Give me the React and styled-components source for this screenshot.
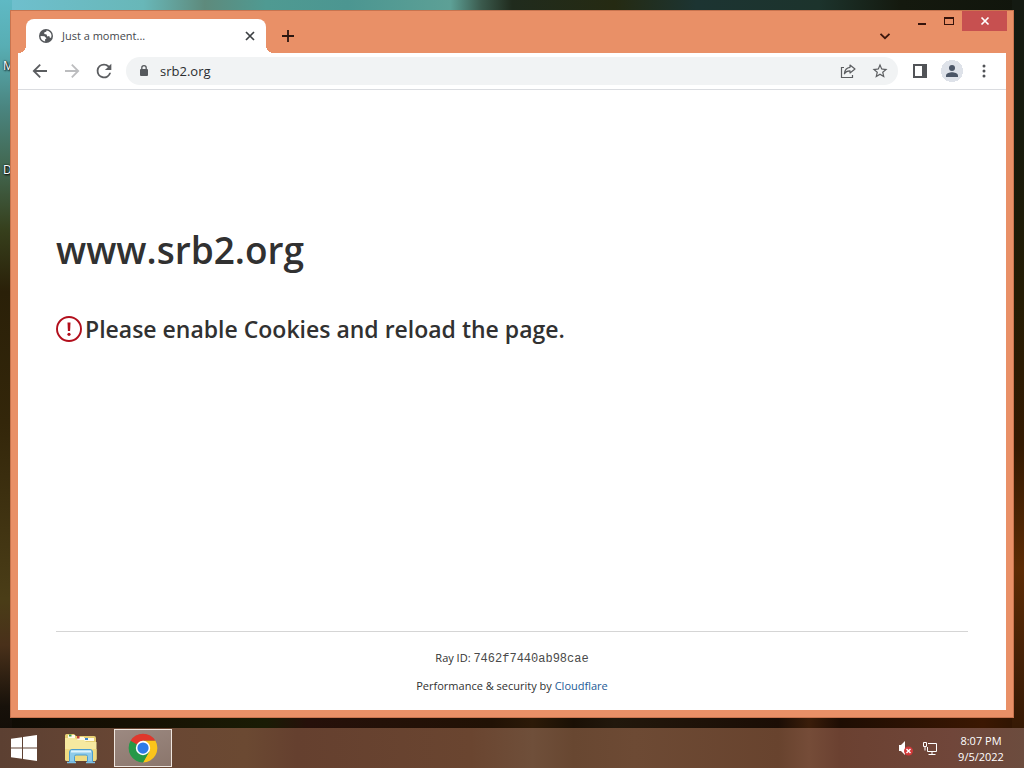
import React, { useState } from 'react';
import styled, { createGlobalStyle } from 'styled-components';

const GlobalStyle = createGlobalStyle`
  * { box-sizing: border-box; }

  body {
    margin: 0;
    font-family: 'Open Sans', 'Noto Sans', sans-serif;
    font-size: 11px;
    line-height: 18px;
    color: #313131;
  }

  button, input {
    font: inherit;
    color: inherit;
    border: 0;
    padding: 0;
    background: none;
  }
`;

// --- DESKTOP ---

const Desktop = styled.div`
  position: relative;
  display: flex;
  flex-direction: column;
  min-height: 100vh;
  background:
    linear-gradient(to bottom, #5fb9c4 0%, #58aeb4 6%, #4a8580 14%, #42664f 22%, #363f1c 30%, #2a2008 38%, #33260a 55%, #4a3d17 78%, #49301a 84%, #17110a 92%, #0d0a05 100%) left / 12px 100% no-repeat,
    linear-gradient(to bottom, #141a12 0%, #171a0c 18%, #241c04 38%, #341a02 58%, #5c2b05 74%, #452107 86%, #2c1402 100%) right / 12px 100% no-repeat,
    linear-gradient(to right, #6fc0cf 0%, #68b7b8 14%, #5e8a7c 20%, #4f9a92 26%, #4c9691 34%, #5da096 44%, #3b5a4d 47%, #202b1d 50%, #252a12 60%, #1c3432 68%, #1c332c 80%, #14190e 88%, #11150c 100%) top / 100% 12px no-repeat,
    linear-gradient(to right, #0f0c05 0%, #161003 12%, #1a1c05 26%, #26100a 30%, #211205 48%, #2c1a08 52%, #1a1005 56%, #22180c 60%, #1b0d05 76%, #3a1d0a 79%, #1e0d03 82%, #3b1702 96%, #2c1402 100%);
`;

const DesktopLabel = styled.span`
  position: absolute;
  left: 3px;
  top: ${({ $top }) => $top}px;
  font-size: 12px;
  color: #fff;
  text-shadow: 1px 1px 2px #000, 0 0 2px #000;
`;

const Workspace = styled.main`
  position: relative;
  flex: 1;
  display: flex;
  padding: 10px;
`;

// --- BROWSER WINDOW ---

const BrowserWindow = styled.section`
  flex: 1;
  min-width: 0;
  display: flex;
  flex-direction: column;
  padding: 0 7px 7px;
  background: #e99067;
  border: 1px solid #c8744f;
`;

const TitleBar = styled.div`
  display: flex;
  align-items: flex-start;
  height: 42px;
`;

const Tab = styled.div`
  position: relative;
  display: flex;
  align-items: center;
  width: 240px;
  height: 34px;
  margin: 8px 10px 0 8px;
  padding: 0 8px 0 12px;
  background: #fff;
  border-radius: 8px 8px 0 0;

  &::before,
  &::after {
    content: '';
    position: absolute;
    bottom: 0;
    width: 8px;
    height: 8px;
  }

  &::before {
    right: 100%;
    background: radial-gradient(circle at 0 0, transparent 8px, #fff 8px);
  }

  &::after {
    left: 100%;
    background: radial-gradient(circle at 100% 0, transparent 8px, #fff 8px);
  }
`;

const TabTitle = styled.span`
  flex: 1;
  margin-left: 8px;
  color: #45484c;
`;

const IconButton = styled.button`
  display: flex;
  align-items: center;
  justify-content: center;
  flex: none;
  width: ${({ $size }) => $size || 28}px;
  height: ${({ $size }) => $size || 28}px;
  border-radius: 50%;
  color: ${({ $color }) => $color || '#5b5d60'};
`;

const TabStripButton = styled(IconButton)`
  margin-top: 13px;
`;

const Spacer = styled.div`
  flex: 1;
`;

// the close button runs over the inner edge of the frame
const WindowControls = styled.div`
  display: flex;
  margin: 0 -1px 0 11px;
`;

const WindowButton = styled.button`
  display: flex;
  align-items: center;
  justify-content: center;
  width: ${({ $close }) => ($close ? 45 : 27)}px;
  height: 20px;
  background: ${({ $close }) => ($close ? '#c75050' : 'transparent')};
`;

const Toolbar = styled.div`
  display: flex;
  align-items: center;
  gap: 4px;
  height: 37px;
  padding: 0 8px;
  background: #fff;
  border-bottom: 1px solid #dadce0;
`;

const Omnibox = styled.label`
  flex: 1;
  display: flex;
  align-items: center;
  gap: 4px;
  height: 28px;
  margin: 0 4px;
  padding: 0 4px 0 10px;
  background: #f1f3f4;
  border-radius: 14px;
`;

const Address = styled.input`
  flex: 1;
  min-width: 0;
  margin-left: 4px;
  font-size: 13px;
  color: #2b2d30;
  outline: none;
`;

const Avatar = styled(IconButton)`
  background: radial-gradient(circle, #dee2e9 11px, transparent 11px);
`;

// --- PAGE ---

const Page = styled.div`
  flex: 1;
  display: flex;
  flex-direction: column;
  padding: 0 38px;
  background: #fff;
`;

const PageBody = styled.div`
  flex: 1;
  padding-top: 130px;
`;

const SiteName = styled.h1`
  margin: 0;
  font-size: 37px;
  line-height: 60px;
  font-weight: 600;
`;

const Notice = styled.h2`
  display: flex;
  align-items: center;
  gap: 3px;
  margin: 32px 0 0;
  font-size: 23px;
  line-height: 34px;
  font-weight: 600;
`;

const Footer = styled.footer`
  display: flex;
  flex-direction: column;
  gap: 10px;
  padding: 17px 0 15px;
  border-top: 1px solid #d5d5d5;
  text-align: center;

  code {
    font-family: 'Liberation Mono', monospace;
    font-size: 12px;
    line-height: 1;
    color: #4a4a4a;
  }

  a {
    color: #1d5a96;
    text-decoration: none;
  }
`;

// --- TASKBAR ---

const Taskbar = styled.nav`
  display: flex;
  align-items: center;
  height: 40px;
  background: linear-gradient(to right, #5c4032 0%, #684634 12%, #6b4932 24%, #65402f 29%, #6a4530 46%, #6f4f3a 52%, #684731 56%, #6d4a34 62%, #68432e 76%, #754c38 79%, #6b4131 82%, #70463a 93%, #6c4c3e 100%);
`;

const TaskButton = styled.button`
  display: flex;
  align-items: center;
  justify-content: center;
  width: ${({ $narrow }) => ($narrow ? 48 : 58)}px;
  height: 38px;
  margin-right: 4px;
  background: ${({ $active }) => ($active ? 'linear-gradient(160deg, #9c8981, #8b766c)' : 'transparent')};
  border: ${({ $active }) => ($active ? '1px solid #efe6df' : '0')};
`;

const Tray = styled.div`
  display: flex;
  align-items: center;
  gap: 8px;
  margin-left: auto;
`;

const Clock = styled.div`
  width: 60px;
  margin: 0 13px 0 5px;
  padding-top: 2px;
  line-height: 16px;
  text-align: center;
  color: #fff;
`;

// --- ICONS ---

const GlobeIcon = () => (
  <svg width="16" height="16" viewBox="0 0 16 16">
    <circle cx="8" cy="8" r="7" fill="#55585c" />
    <path d="M2.6 8 6.4 8.2 8.5 10.2 7 11.4 7.2 13.4A5.6 5.6 0 0 1 2.5 8Z" fill="#fff" />
    <path d="M8.6 2.5 8.2 3.8 6.4 4.2 6.2 6 8.6 6.4 9.2 8.4 11.2 8 12 10.1 13.2 9.4A5.6 5.6 0 0 0 10.4 2.9Z" fill="#fff" />
  </svg>
);

const CloseIcon = () => (
  <svg width="16" height="16" viewBox="0 0 16 16" stroke="#3c4043" strokeWidth="1.7">
    <path d="M4 4 12 12M12 4 4 12" />
  </svg>
);

const PlusIcon = () => (
  <svg width="16" height="16" viewBox="0 0 16 16" stroke="#2b1610" strokeWidth="1.8">
    <path d="M8 2V14M2 8H14" />
  </svg>
);

const ChevronIcon = () => (
  <svg width="16" height="16" viewBox="0 0 16 16" fill="none" stroke="#3b160c" strokeWidth="1.8">
    <path d="M3.5 5.8 8 10.2 12.5 5.8" />
  </svg>
);

const MinimizeIcon = () => (
  <svg width="12" height="12" viewBox="0 0 12 12">
    <path d="M2 8H10V10H2Z" fill="#35130b" />
  </svg>
);

const MaximizeIcon = () => (
  <svg width="12" height="12" viewBox="0 0 12 12">
    <path d="M1 2H11V10H1ZM2 4V9H10V4Z" fill="#35130b" fillRule="evenodd" />
  </svg>
);

const WindowCloseIcon = () => (
  <svg width="10" height="10" viewBox="0 0 10 10" stroke="#fff" strokeWidth="1.7">
    <path d="M1.5 1.5 8.5 8.5M8.5 1.5 1.5 8.5" />
  </svg>
);

const BackIcon = () => (
  <svg width="18" height="18" viewBox="0 0 18 18" fill="none" stroke="currentColor" strokeWidth="1.8">
    <path d="M16 9H3M9.2 2.6 2.8 9 9.2 15.4" />
  </svg>
);

const ForwardIcon = () => (
  <svg width="18" height="18" viewBox="0 0 18 18" fill="none" stroke="currentColor" strokeWidth="1.8">
    <path d="M2 9H15M8.8 2.6 15.2 9 8.8 15.4" />
  </svg>
);

const ReloadIcon = () => (
  <svg width="22" height="22" viewBox="0 0 24 24" fill="currentColor">
    <path d="M17.65 6.35A7.96 7.96 0 0 0 12 4a8 8 0 1 0 7.73 10h-2.08A6 6 0 1 1 12 6c1.66 0 3.14.69 4.22 1.78L13 11h7V4z" />
  </svg>
);

const LockIcon = () => (
  <svg width="16" height="16" viewBox="0 0 16 16">
    <rect x="4" y="6" width="8" height="7" rx="1" fill="#56595d" />
    <path d="M5.8 6.5V4.8a2.2 2.2 0 0 1 4.4 0V6.5" fill="none" stroke="#56595d" strokeWidth="1.3" />
  </svg>
);

const ShareIcon = () => (
  <svg width="16" height="16" viewBox="0 0 16 16" fill="none" stroke="currentColor" strokeWidth="1.2">
    <path d="M4 4.5H1.5V14.5H12.5V12" />
    <path d="M10 2 15 6 10 10V7.8C7.5 7.7 5.6 8.7 4.4 10.8 4.7 7.2 6.6 4.6 10 4.3Z" strokeLinejoin="round" />
  </svg>
);

const StarIcon = () => (
  <svg width="18" height="18" viewBox="0 0 24 24" fill="currentColor">
    <path d="m22 9.24-7.19-.62L12 2 9.19 8.63 2 9.24l5.46 4.73L5.82 21 12 17.27 18.18 21l-1.63-7.03zM12 15.4l-3.76 2.27 1-4.28-3.32-2.88 4.38-.38L12 6.1l1.71 4.04 4.38.38-3.32 2.88 1 4.28z" />
  </svg>
);

const SidePanelIcon = () => (
  <svg width="16" height="16" viewBox="0 0 16 16">
    <path d="M1 1H15V15H1ZM3 3V13H10V3Z" fill="#515357" fillRule="evenodd" />
  </svg>
);

const PersonIcon = () => (
  <svg width="14" height="14" viewBox="0 0 14 14" fill="#4b5667">
    <circle cx="7" cy="4" r="3" />
    <path d="M1 13V11.4C1 9.4 4.8 8.3 7 8.3S13 9.4 13 11.4V13Z" />
  </svg>
);

const MenuIcon = () => (
  <svg width="16" height="16" viewBox="0 0 16 16" fill="#515357">
    <circle cx="8" cy="3" r="1.5" />
    <circle cx="8" cy="8" r="1.5" />
    <circle cx="8" cy="13" r="1.5" />
  </svg>
);

const AlertIcon = () => (
  <svg width="26" height="26" viewBox="0 0 26 26">
    <circle cx="13" cy="13" r="12" fill="none" stroke="#b20f1c" strokeWidth="1.9" />
    <path d="M11.5 6.5H14.5L14.1 15H11.9Z" fill="#b20f1c" />
    <circle cx="13" cy="18.3" r="1.6" fill="#b20f1c" />
  </svg>
);

const WindowsIcon = () => (
  <svg width="26" height="26" viewBox="0 0 26 26" fill="#fff">
    <path d="M0 3.8 11 2.2V12.4H0ZM12 2 26 0V12.4H12ZM0 13.4H11V23.8L0 22.2ZM12 13.4H26V26L12 24Z" />
  </svg>
);

const ExplorerIcon = () => (
  <svg width="34" height="32" viewBox="0 0 34 32">
    <path d="M1 3.5Q1 2 2.5 2H10L12 4H30Q32 4 32 6V27H1Z" fill="#e6cf73" />
    <path d="M4 3H11V6H4ZM13 5H20V8H13ZM20 6H30V9H20Z" fill="#fffbe9" />
    <path d="M5 2.5H7.5V4.5H5Z" fill="#3d9a4c" />
    <path d="M13 4H15.5V6.5H13Z" fill="#c44536" />
    <path d="M21 6H24V8H21Z" fill="#3a87cc" />
    <path d="M1 6H11L14 8H20L22 10H32.5V27Q32.5 29 30.5 29H3Q1 29 1 27Z" fill="#f6e9a0" />
    <path d="M1 17H32.5V27Q32.5 29 30.5 29H3Q1 29 1 27Z" fill="#efdb82" />
    <path d="M5.5 20Q5.5 17.5 8 17.5H26Q28.5 17.5 28.5 20V30H23.5V24.5Q23.5 23 22 23H12Q10.5 23 10.5 24.5V30H5.5Z" fill="#8fcbea" stroke="#4b9dce" strokeWidth="1" />
    <path d="M7 19.5H27" stroke="#def3fc" strokeWidth="2" />
    <path d="M3 30.5H12M22 30.5H31" stroke="#7fbfe2" strokeWidth="1.5" />
  </svg>
);

const ChromeIcon = () => (
  <svg width="30" height="30" viewBox="0 0 48 48">
    <circle cx="24" cy="24" r="22" fill="#259847" />
    <path d="M24 24 4.1 12.5A23 23 0 0 1 43.9 12.5H24Z" fill="#e0372c" />
    <path d="M24 12.5H43.9A23 23 0 0 1 24 47L34 29.7Z" fill="#fbc41b" />
    <path d="M4.1 12.5 14 29.7 24 35.5 34 29.7 24 47A23 23 0 0 1 4.1 12.5Z" fill="#259847" />
    <circle cx="24" cy="24" r="11.5" fill="#fff" />
    <circle cx="24" cy="24" r="9" fill="#2d7be8" />
  </svg>
);

const MutedIcon = () => (
  <svg width="16" height="16" viewBox="0 0 16 16">
    <path d="M1 5H3L7 1V15L3 11H1Z" fill="#fff" />
    <circle cx="10.5" cy="11" r="4.5" fill="#d23a3a" />
    <path d="M8.5 9 12.5 13M12.5 9 8.5 13" stroke="#fff" strokeWidth="1.4" />
  </svg>
);

const NetworkIcon = () => (
  <svg width="16" height="16" viewBox="0 0 16 16" fill="none" stroke="#fff">
    <path d="M6 3.5H14.5V11.5H5.5V7M10 11.5V14M6.5 14.5H13.5" />
    <path d="M1.5 2.5H4.5V6.5H1.5ZM3 6.5V10.5" />
  </svg>
);

const App = () => {
  const [address, setAddress] = useState('srb2.org');

  return (
    <Desktop>
      <GlobalStyle />
      <DesktopLabel $top={57}>M</DesktopLabel>
      <DesktopLabel $top={161}>D</DesktopLabel>

      <Workspace>
        <BrowserWindow>
          <TitleBar>
            <Tab>
              <GlobeIcon />
              <TabTitle>Just a moment...</TabTitle>
              <IconButton $size={16} aria-label="Close tab"><CloseIcon /></IconButton>
            </Tab>
            <TabStripButton $size={24} aria-label="New tab"><PlusIcon /></TabStripButton>
            <Spacer />
            <TabStripButton $size={24} aria-label="Search tabs"><ChevronIcon /></TabStripButton>
            <WindowControls>
              <WindowButton aria-label="Minimize"><MinimizeIcon /></WindowButton>
              <WindowButton aria-label="Maximize"><MaximizeIcon /></WindowButton>
              <WindowButton $close aria-label="Close"><WindowCloseIcon /></WindowButton>
            </WindowControls>
          </TitleBar>

          <Toolbar>
            <IconButton aria-label="Back"><BackIcon /></IconButton>
            <IconButton $color="#bcbdbf" aria-label="Forward"><ForwardIcon /></IconButton>
            <IconButton aria-label="Reload"><ReloadIcon /></IconButton>
            <Omnibox>
              <LockIcon />
              <Address
                aria-label="Address"
                value={address}
                onChange={(e) => setAddress(e.target.value)}
              />
              <IconButton aria-label="Share"><ShareIcon /></IconButton>
              <IconButton aria-label="Bookmark"><StarIcon /></IconButton>
            </Omnibox>
            <IconButton aria-label="Side panel"><SidePanelIcon /></IconButton>
            <Avatar aria-label="Profile"><PersonIcon /></Avatar>
            <IconButton aria-label="Menu"><MenuIcon /></IconButton>
          </Toolbar>

          <Page>
            <PageBody>
              <SiteName>www.srb2.org</SiteName>
              <Notice>
                <AlertIcon />
                Please enable Cookies and reload the page.
              </Notice>
            </PageBody>
            <Footer>
              <div>Ray ID: <code>7462f7440ab98cae</code></div>
              <div>Performance &amp; security by <a href="#cloudflare">Cloudflare</a></div>
            </Footer>
          </Page>
        </BrowserWindow>
      </Workspace>

      <Taskbar>
        <TaskButton $narrow aria-label="Start"><WindowsIcon /></TaskButton>
        <TaskButton aria-label="File Explorer"><ExplorerIcon /></TaskButton>
        <TaskButton $active aria-label="Chrome"><ChromeIcon /></TaskButton>
        <Tray>
          <MutedIcon />
          <NetworkIcon />
          <Clock>
            <div>8:07 PM</div>
            <div>9/5/2022</div>
          </Clock>
        </Tray>
      </Taskbar>
    </Desktop>
  );
};

export default App;
